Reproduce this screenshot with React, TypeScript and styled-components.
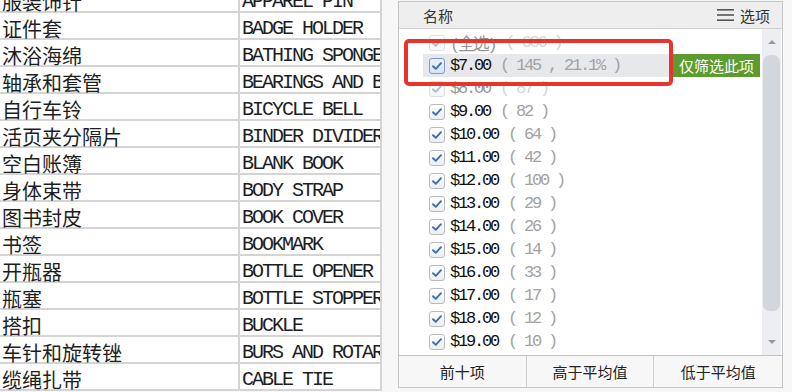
import React from 'react';
import styled, { createGlobalStyle } from 'styled-components';

const Global = createGlobalStyle`
  html, body { margin: 0; padding: 0; background: #f7f7f7; overflow: hidden; }
  #root { width: 792px; height: 392px; overflow: hidden; }
`;

const Page = styled.div`
  display: flex;
  align-items: flex-start;
  width: 792px;
  height: 392px;
  overflow: hidden;
`;

const Sheet = styled.div`
  width: 382px;
  box-sizing: border-box;
  flex-shrink: 0;
  margin-top: -14px;
  background: #fff;
  border-right: 2px solid #d4d4d4;
  overflow: hidden;
`;

const SheetRow = styled.div`
  display: grid;
  grid-template-columns: 240px 140px;
  height: 27px;
`;

const Cell = styled.div<{ $mono?: boolean }>`
  box-sizing: border-box;
  border-right: ${(p) => (p.$mono ? 'none' : '2px solid #d4d4d4')};
  border-bottom: 2px solid #d4d4d4;
  padding-left: 2px;
  padding-top: 7px;
  display: flex;
  align-items: flex-start;
  white-space: nowrap;
  line-height: 18px;
  color: #1e1e1e;
  font-family: ${(p) => (p.$mono ? '"Liberation Mono", monospace' : '"Noto Sans CJK SC", sans-serif')};
  font-size: 20px;
  letter-spacing: ${(p) => (p.$mono ? '-2px' : '0')};
`;

const Panel = styled.div`
  position: relative;
  flex-shrink: 0;
  margin-left: 16px;
  margin-top: 1px;
  width: 385px;
  box-sizing: border-box;
  border: 1px solid #c6c6c6;
  background: #f4f4f4;
  display: flex;
  flex-direction: column;
`;

const Header = styled.div`
  height: 26px;
  background: #eeeeee;
  border-bottom: 1px solid #d2d2d2;
  display: flex;
  align-items: center;
  justify-content: space-between;
  padding: 0 12px 0 24px;
  font-family: "Noto Sans CJK SC", sans-serif;
  font-size: 15px;
  color: #333;
`;

const Options = styled.div`
  display: flex;
  align-items: center;
  gap: 6px;
`;

const List = styled.div`
  height: 326px;
  background: #fff;
  display: flex;
`;

const Items = styled.div`
  flex: 1;
  padding: 2px 0 0 24px;
  overflow: hidden;
  margin-right: 2px;
`;

const Row = styled.div<{ $active?: boolean; $faded?: boolean }>`
  height: 23px;
  display: flex;
  align-items: center;
  padding-left: 6px;
  background: ${(p) => (p.$active ? '#e7e8eb' : 'transparent')};
  opacity: ${(p) => (p.$faded ? 0.45 : 1)};
  white-space: nowrap;
`;

const Box = styled.span<{ $active?: boolean }>`
  width: 16px;
  height: 16px;
  box-sizing: border-box;
  border: 1px solid ${(p) => (p.$active ? '#7d9ccc' : '#b7bcc4')};
  border-radius: 3px;
  background: ${(p) => (p.$active ? 'linear-gradient(#e9f0fa, #d7e3f5)' : 'linear-gradient(#ffffff, #eceef1)')};
  display: flex;
  align-items: center;
  justify-content: center;
  flex-shrink: 0;
`;

const Label = styled.span`
  margin-left: 5px;
  font-family: "Liberation Mono", "Noto Sans CJK SC", monospace;
  font-size: 17px;
  letter-spacing: -2.2px;
  color: #111;
`;

const Count = styled.span`
  margin-left: 10px;
  font-family: "Liberation Mono", monospace;
  font-size: 17px;
  letter-spacing: -2.2px;
  color: #a3a3a3;
`;

const OnlyButton = styled.span`
  margin-left: auto;
  height: 23px;
  padding: 0 6px;
  background: #5b9b2f;
  color: #fff;
  font-family: "Noto Sans CJK SC", sans-serif;
  font-size: 15px;
  display: flex;
  align-items: center;
`;

const Scrollbar = styled.div`
  width: 19px;
  margin-right: 1px;
  background: #eceef1;
  display: flex;
  flex-direction: column;
  align-items: center;
`;

const ArrowCell = styled.div`
  height: 26px;
  display: flex;
  align-items: center;
  justify-content: center;
`;

const Arrow = styled.span<{ $down?: boolean }>`
  width: 0;
  height: 0;
  border-left: 4px solid transparent;
  border-right: 4px solid transparent;
  ${(p) => (p.$down ? 'border-top: 4px solid #9a9a9a;' : 'border-bottom: 4px solid #9a9a9a;')}
`;

const Thumb = styled.div`
  width: 17px;
  height: 256px;
  border-radius: 7px;
  background: #d3d6db;
`;

const Spacer = styled.div`
  flex: 1;
`;

const ButtonBar = styled.div`
  border-top: 1px solid #bfc3c9;
  height: 31px;
  display: grid;
  grid-template-columns: 1fr 1fr 1fr;
  background: #f7f7f7;
`;

const BarButton = styled.div<{ $last?: boolean }>`
  display: flex;
  align-items: center;
  justify-content: center;
  border-right: ${(p) => (p.$last ? 'none' : '1px solid #cfcfcf')};
  font-family: "Noto Sans CJK SC", sans-serif;
  font-size: 15px;
  color: #222;
`;

const RedMark = styled.div`
  position: absolute;
  left: 5px;
  top: 37px;
  width: 269px;
  height: 47px;
  box-sizing: border-box;
  border: 4px solid #e8352b;
  border-radius: 5px;
  pointer-events: none;
`;

const sheet: [string, string][] = [
  ['服装饰针', 'APPAREL PIN'],
  ['证件套', 'BADGE HOLDER'],
  ['沐浴海绵', 'BATHING SPONGE'],
  ['轴承和套管', 'BEARINGS AND BUSHINGS'],
  ['自行车铃', 'BICYCLE BELL'],
  ['活页夹分隔片', 'BINDER DIVIDER'],
  ['空白账簿', 'BLANK BOOK'],
  ['身体束带', 'BODY STRAP'],
  ['图书封皮', 'BOOK COVER'],
  ['书签', 'BOOKMARK'],
  ['开瓶器', 'BOTTLE OPENER'],
  ['瓶塞', 'BOTTLE STOPPER'],
  ['搭扣', 'BUCKLE'],
  ['车针和旋转锉', 'BURS AND ROTARY FILES'],
  ['缆绳扎带', 'CABLE TIE'],
];

type Item = { label: string; count: string; active?: boolean; faded?: boolean };

const items: Item[] = [
  { label: '(全选)', count: '( 686 )', faded: true },
  { label: '$7.00', count: '( 145 , 21.1% )', active: true },
  { label: '$8.00', count: '( 87 )', faded: true },
  { label: '$9.00', count: '( 82 )' },
  { label: '$10.00', count: '( 64 )' },
  { label: '$11.00', count: '( 42 )' },
  { label: '$12.00', count: '( 100 )' },
  { label: '$13.00', count: '( 29 )' },
  { label: '$14.00', count: '( 26 )' },
  { label: '$15.00', count: '( 14 )' },
  { label: '$16.00', count: '( 33 )' },
  { label: '$17.00', count: '( 17 )' },
  { label: '$18.00', count: '( 12 )' },
  { label: '$19.00', count: '( 10 )' },
];

const Check = () => (
  <svg width="12" height="12" viewBox="0 0 12 12">
    <path d="M2 6.2 L4.8 8.8 L10 3.2" fill="none" stroke="#3f6db3" strokeWidth="1.9" strokeLinecap="round" strokeLinejoin="round" />
  </svg>
);

const MenuIcon = () => (
  <svg width="17" height="14" viewBox="0 0 17 14">
    <rect x="0" y="1" width="17" height="1.6" fill="#555" />
    <rect x="0" y="6.2" width="17" height="1.6" fill="#555" />
    <rect x="0" y="11.4" width="17" height="1.6" fill="#555" />
  </svg>
);

export default function App() {
  return (
    <>
      <Global />
      <Page>
        <Sheet>
          {sheet.map(([cn, en]) => (
            <SheetRow key={cn}>
              <Cell>{cn}</Cell>
              <Cell $mono>{en}</Cell>
            </SheetRow>
          ))}
        </Sheet>
        <Panel>
          <Header>
            <span>名称</span>
            <Options>
              <MenuIcon />
              <span>选项</span>
            </Options>
          </Header>
          <List>
            <Items>
              {items.map((it) => (
                <Row key={it.label} $active={it.active} $faded={it.faded}>
                  <Box $active={it.active}>
                    <Check />
                  </Box>
                  <Label>{it.label}</Label>
                  <Count>{it.count}</Count>
                  {it.active && <OnlyButton>仅筛选此项</OnlyButton>}
                </Row>
              ))}
              <Row>
                <Box>
                  <Check />
                </Box>
              </Row>
            </Items>
            <Scrollbar>
              <ArrowCell>
                <Arrow />
              </ArrowCell>
              <Thumb />
              <Spacer />
              <ArrowCell>
                <Arrow $down />
              </ArrowCell>
            </Scrollbar>
          </List>
          <ButtonBar>
            <BarButton>前十项</BarButton>
            <BarButton>高于平均值</BarButton>
            <BarButton $last>低于平均值</BarButton>
          </ButtonBar>
          <RedMark />
        </Panel>
      </Page>
    </>
  );
}
